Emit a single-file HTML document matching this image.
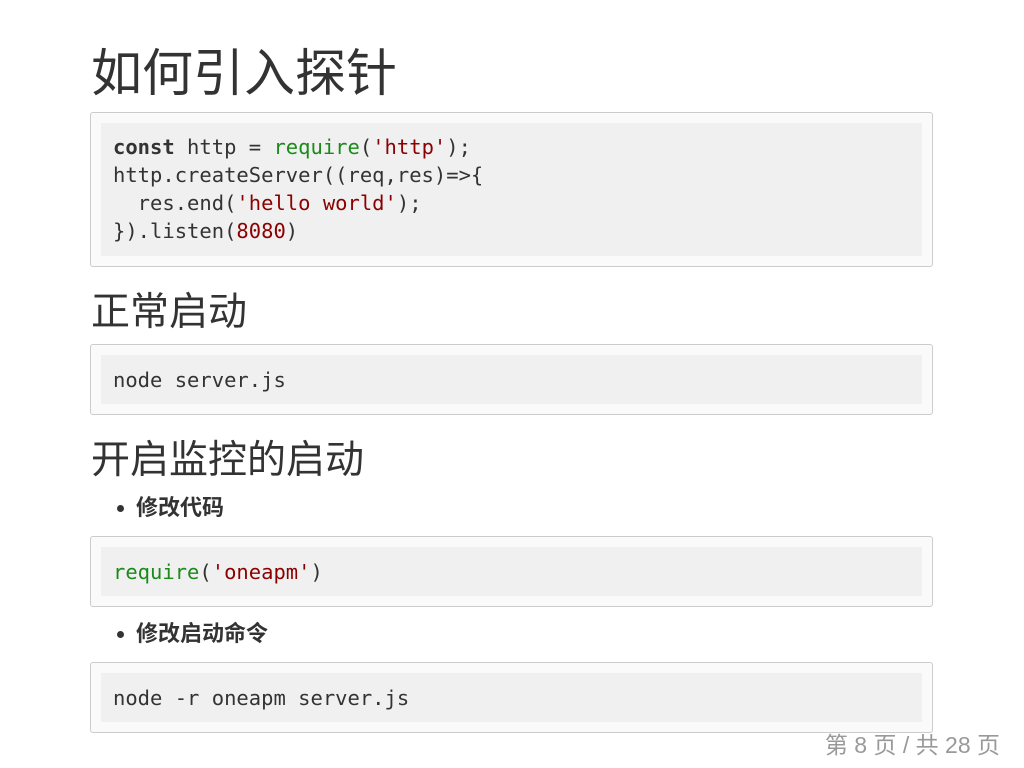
<!DOCTYPE html>
<html><head><meta charset="utf-8"><style>
body{margin:0;width:1024px;height:768px;background:#fff;position:relative;overflow:hidden;font-family:"Liberation Sans","Noto Sans CJK SC",sans-serif;color:#333}
.a{position:absolute}
h1,h2{margin:0;font-weight:normal;position:absolute;left:91px;line-height:1;color:#333}
.box{position:absolute;left:90px;width:841px;border:1px solid #ccc;border-radius:3px;background:#fafafa}
.in{position:absolute;left:10px;top:10px;right:10px;bottom:10px;background:#f0f0f0}
pre{margin:0;position:absolute;left:22px;font-family:"DejaVu Sans Mono",monospace;font-size:20.5px;line-height:28px;color:#333}
.k{font-weight:bold}.g{color:#1a8a1a}.r{color:#8b0000}
.li{position:absolute;left:136px;font-size:22px;font-weight:bold;line-height:1}
.li:before{content:"";position:absolute;left:-19px;top:8px;width:7px;height:7px;border-radius:50%;background:#333}
</style></head><body>
<h1 style="top:48px;font-size:51px">如何引入探针</h1>
<div class="box" style="top:112px;height:153px"><div class="in"></div>
<pre style="top:20px"><span class="k">const</span> http = <span class="g">require</span>(<span class="r">'http'</span>);
http.createServer((req,res)=>{
  res.end(<span class="r">'hello world'</span>);
}).listen(<span class="r">8080</span>)</pre></div>
<h2 style="top:293px;font-size:39px">正常启动</h2>
<div class="box" style="top:344px;height:69px"><div class="in"></div>
<pre style="top:21px">node server.js</pre></div>
<h2 style="top:441px;font-size:39px">开启监控的启动</h2>
<div class="li" style="top:497px">修改代码</div>
<div class="box" style="top:536px;height:69px"><div class="in"></div>
<pre style="top:21px"><span class="g">require</span>(<span class="r">'oneapm'</span>)</pre></div>
<div class="li" style="top:623px">修改启动命令</div>
<div class="box" style="top:662px;height:69px"><div class="in"></div>
<pre style="top:21px">node -r oneapm server.js</pre></div>
<div class="a" style="right:24px;top:726px;font-size:23px;color:#999">第 8 页 / 共 28 页</div>
</body></html>
